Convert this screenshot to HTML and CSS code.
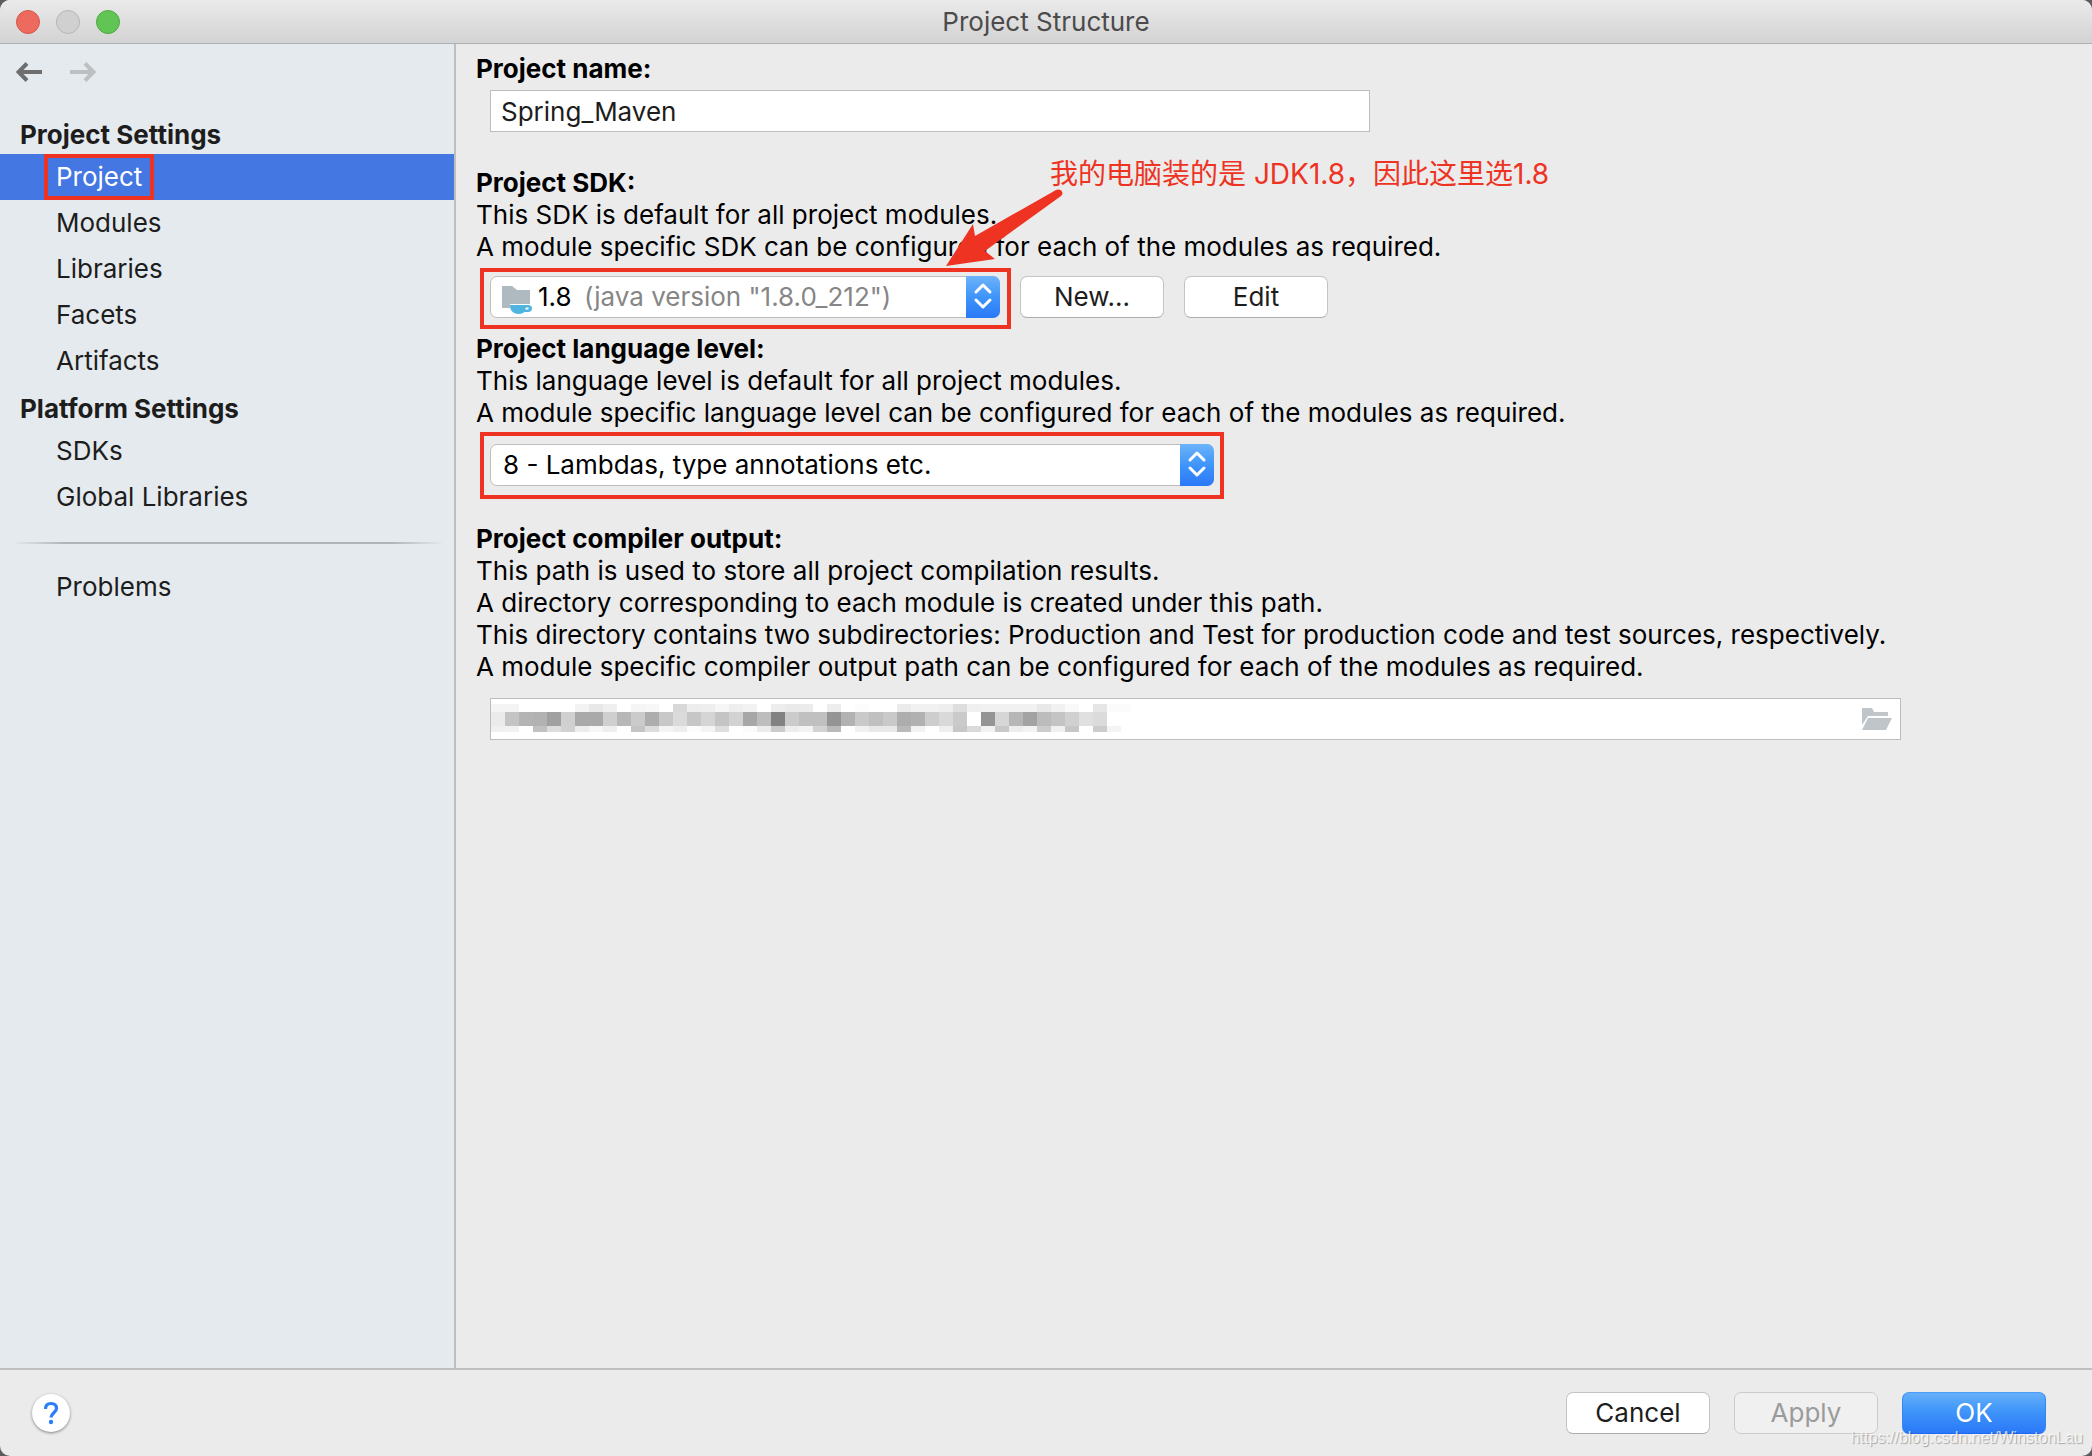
FILE: index.html
```html
<!DOCTYPE html>
<html lang="en">
<head>
<meta charset="utf-8">
<title>Project Structure</title>
<link rel="stylesheet" href="styles.css">
</head>
<body>
<div class="window">
  <header class="titlebar">
    <div class="lights">
      <button class="light light-close" aria-label="Close"></button>
      <button class="light light-minimize" aria-label="Minimize"></button>
      <button class="light light-zoom" aria-label="Zoom"></button>
    </div>
    <h1 class="title">Project Structure</h1>
  </header>

  <div class="content">
    <aside class="sidebar">
      <div class="history">
        <button class="history-button" aria-label="Back">
          <svg width="26" height="20" viewBox="0 0 26 20" fill="none" stroke="#6e6e6e" stroke-width="4"><path d="M26 10H3M11 1.500L2.500 10l8.500 8.500"/></svg>
        </button>
        <button class="history-button" aria-label="Forward" disabled>
          <svg width="26" height="20" viewBox="0 0 26 20" fill="none" stroke="#bdbfc0" stroke-width="4"><path d="M0 10h23M15 1.500L23.500 10 15 18.500"/></svg>
        </button>
      </div>
      <nav>
        <h2 class="group">Project Settings</h2>
        <ul class="items">
          <li><a class="item selected" href="#project" aria-current="page"><span class="marked">Project</span></a></li>
          <li><a class="item" href="#modules">Modules</a></li>
          <li><a class="item" href="#libraries">Libraries</a></li>
          <li><a class="item" href="#facets">Facets</a></li>
          <li><a class="item" href="#artifacts">Artifacts</a></li>
        </ul>
        <h2 class="group group-next">Platform Settings</h2>
        <ul class="items">
          <li><a class="item" href="#sdks">SDKs</a></li>
          <li><a class="item" href="#global">Global Libraries</a></li>
        </ul>
        <hr class="divider">
        <ul class="items">
          <li><a class="item" href="#problems">Problems</a></li>
        </ul>
      </nav>
    </aside>

    <main class="panel">
      <section class="section-name">
        <label class="heading" for="name">Project name:</label>
        <div class="row row-name"><input class="field" id="name" type="text" value="Spring_Maven"></div>
      </section>

      <section class="section-sdk">
        <label class="heading" for="sdk">Project SDK:</label>
        <p>This SDK is default for all project modules.</p>
        <p>A module specific SDK can be configured for each of the modules as required.</p>
        <div class="row row-sdk">
          <div class="combo combo-sdk">
            <select class="combo-select with-icon" id="sdk"><option>1.8</option></select>
            <span class="combo-detail">
              <svg width="30" height="28" viewBox="0 0 30 28"><path d="M0 0h10l5 4h13v14H8v4H0z" fill="#afb9c0"/><path d="M8 19h18c2.600 0 4 1.500 4 3.500S28.500 26 26 26h-3.500c-1.700 1.300-3 2-6 2C11 28 8 24.500 8 19z" fill="#4fb4df"/><path d="M24 21.500h2.500v2H23z" fill="#fff"/></svg>
              <span class="version">(java version "1.8.0_212")</span>
            </span>
            <svg class="stepper" width="34" height="42" viewBox="0 0 34 42" fill="none" stroke="#fff" stroke-width="3" stroke-linecap="round" stroke-linejoin="round"><path d="M10 16l7-7 7 7M10 24l7 7 7-7"/></svg>
            <span class="outline outline-sdk"></span>
          </div>
          <button class="button">New...</button>
          <button class="button">Edit</button>
        </div>
        <svg class="arrow" width="120" height="80" viewBox="0 0 120 80"><path d="M2 77L29 35l2 12L112 1c4-2 9 2 5 6L41 62l10 8z" fill="#ee3323"/></svg>
        <span class="note">我的电脑装的是 JDK1.8，因此这里选1.8</span>
      </section>

      <section class="section-level">
        <label class="heading" for="level">Project language level:</label>
        <p>This language level is default for all project modules.</p>
        <p>A module specific language level can be configured for each of the modules as required.</p>
        <div class="row">
          <div class="combo combo-level">
            <select class="combo-select" id="level"><option>8 - Lambdas, type annotations etc.</option></select>
            <svg class="stepper" width="34" height="42" viewBox="0 0 34 42" fill="none" stroke="#fff" stroke-width="3" stroke-linecap="round" stroke-linejoin="round"><path d="M10 16l7-7 7 7M10 24l7 7 7-7"/></svg>
            <span class="outline outline-level"></span>
          </div>
        </div>
      </section>

      <section class="section-output">
        <label class="heading" for="output">Project compiler output:</label>
        <p>This path is used to store all project compilation results.</p>
        <p>A directory corresponding to each module is created under this path.</p>
        <p>This directory contains two subdirectories: Production and Test for production code and test sources, respectively.</p>
        <p>A module specific compiler output path can be configured for each of the modules as required.</p>
        <div class="row row-output">
          <input class="field" id="output" type="text">
          <svg class="mosaic" id="mosaic" width="640" height="30" viewBox="0 0 640 30" shape-rendering="crispEdges"></svg>
          <button class="browse" aria-label="Browse">
            <svg width="30" height="22" viewBox="0 0 30 22" fill="#bfc5c9"><path d="M0 0h10l2 4h14v4H6L0 17z"/><path d="M6 10h24l-6 12H0z"/></svg>
          </button>
        </div>
      </section>
    </main>
  </div>

  <footer class="footer">
    <button class="help" aria-label="Help">
      <svg width="16" height="24" viewBox="0 0 16 24"><path d="M2.500 8C2.500 4 4.500 2.500 8 2.500s5.500 2 5.500 5c0 4-5.500 4.500-5.500 9" fill="none" stroke="#2a7dfb" stroke-width="3.200"/><circle cx="8" cy="21" r="2.200" fill="#2a7dfb"/></svg>
    </button>
    <div class="actions">
      <button class="button">Cancel</button>
      <button class="button" disabled>Apply</button>
      <button class="button primary">OK</button>
    </div>
    <span class="watermark">https://blog.csdn.net/WinstonLau</span>
  </footer>
</div>
<script src="script.js"></script>
</body>
</html>
```
FILE: script.js
```js
// Pixelated cover over the private output path: three rows of grey cells.
const rows = [
  { y: 0, h: 8, cells: "f4 f4 ff ff ff ff f3 e8 ef ff f5 f7 ff d8 ed ee f6 ee f2 ff ed ea eb ff ed ff fc ff ff eb f1 f1 ee de f0 f1 f1 f1 f1 e8 f1 f9 ff e6 fb fb" },
  { y: 8, h: 14, cells: "eb c4 b4 b2 a0 d0 a9 a9 cf b7 cb ad c8 da c6 d5 c4 d2 a7 bd 82 cb c0 c0 94 b2 c9 c0 c9 ad b1 cd d9 ca ff 94 d6 b6 a3 bc c4 d0 e0 db" },
  { y: 22, h: 6, cells: "f0 f2 ff c0 dc d1 ec f6 ee ff c4 dc f4 ee fc f4 de ff fb eb cb ed f3 d2 b9 ff f0 e8 e8 b9 f2 ff ee c7 da f2 c8 ed f3 cc f0 c6 ff cc f4" }
];
const mosaic = document.getElementById("mosaic");
for (const row of rows) {
  row.cells.split(" ").forEach((tone, i) => {
    const cell = document.createElementNS("http://www.w3.org/2000/svg", "rect");
    cell.setAttribute("x", i * 14);
    cell.setAttribute("y", row.y);
    cell.setAttribute("width", 14);
    cell.setAttribute("height", row.h);
    cell.setAttribute("fill", "#" + tone.repeat(3));
    mosaic.append(cell);
  });
}
```
FILE: styles.css
```css
* { box-sizing: border-box; }

body {
  margin: 0;
  background: #5c5c5c;
  color: #000;
  font-family: Inter, "Noto Sans CJK SC", sans-serif;
  font-size: 26px;
  line-height: 32px;
}

h1, h2, p, ul { margin: 0; padding: 0; }
button, input, select { font: inherit; color: #1d1d1d; margin: 0; }
button { padding: 0; }
svg { display: block; }

.window {
  display: flex;
  flex-direction: column;
  min-height: 100vh;
  background: #ebebeb;
  border-radius: 10px;
  overflow: hidden;
}

.titlebar {
  display: grid;
  grid-template-columns: 1fr auto 1fr;
  align-items: center;
  height: 44px;
  padding: 0 16px;
  background: linear-gradient(#eaeaea, #d3d3d3);
  border-bottom: 1px solid #b1b1b1;
}
.lights { display: flex; gap: 16px; }
.light {
  width: 24px;
  height: 24px;
  border: 1px solid #b5b5b5;
  border-radius: 50%;
  background: #d0d0d0;
}
.light-close { background: #ed6a5e; border-color: #d5574c; }
.light-zoom { background: #61c555; border-color: #4fa73f; }
.title { font-size: 26px; font-weight: 400; color: #4b4b4b; }

.content { display: flex; flex: 1; }

.sidebar {
  flex: 0 0 456px;
  background: #e5eaee;
  border-right: 2px solid #bfbfbf;
}
.history { display: flex; gap: 28px; padding: 18px 16px 34px; }
.history-button { border: 0; background: none; height: 20px; }
.group {
  padding-left: 20px;
  font-size: 26px;
  font-weight: 700;
  line-height: 38px;
  color: #1d1d1d;
}
.group-next { padding-top: 6px; }
.items { list-style: none; }
.item {
  display: flex;
  height: 46px;
  padding-left: 56px;
  line-height: 46px;
  color: #1d1d1d;
  text-decoration: none;
}
.selected { padding-left: 44px; background: #4477e2; color: #fff; }
.marked { border: 4px solid #ee3323; padding: 0 8px; line-height: 38px; }
.divider {
  height: 2px;
  margin: 22px 10px 20px 12px;
  border: 0;
  background: linear-gradient(90deg, transparent, #b2b5b8 12%, #b2b5b8 88%, transparent);
}

.panel { flex: 1; padding: 9px 20px 40px; min-width: 0; }
.heading { display: block; width: max-content; font-weight: 700; }
.row { display: flex; gap: 20px; padding: 15px 0 0 14px; }
.field {
  width: 100%;
  height: 42px;
  padding: 0 10px;
  border: 1px solid #bdbdbd;
  background: #fff;
  border-radius: 0;
}
.section-name { margin-bottom: 35px; }
.row-name { max-width: 894px; padding-top: 5px; }

.section-sdk { position: relative; margin-bottom: 15px; }
.row-sdk { padding-top: 13px; }
.combo {
  position: relative;
  display: grid;
  grid-template-columns: 1fr 34px;
  height: 42px;
}
.combo-sdk { width: 510px; }
.combo-level { width: 724px; }
.combo-select {
  grid-area: 1 / 1 / 2 / 3;
  appearance: none;
  height: 42px;
  padding: 0 44px 0 12px;
  border: 1px solid #bdbdbd;
  border-radius: 7px;
  background: #fff;
  color: #000;
}
.with-icon { padding-left: 47px; }
.combo-detail {
  grid-area: 1 / 1;
  display: flex;
  align-items: center;
  gap: 52px;
  padding-left: 12px;
  position: relative;
  pointer-events: none;
  color: #868686;
}
.combo-detail svg { margin-top: 6px; }
.stepper {
  grid-area: 1 / 2;
  position: relative;
  pointer-events: none;
  border-radius: 0 7px 7px 0;
  background: linear-gradient(#6cb3fa, #3f95f9 50%, #2a78f8);
}
.outline { position: absolute; border: 4px solid #ee3323; pointer-events: none; }
.outline-sdk { inset: -8px -11px -11px -10px; }
.outline-level { inset: -12px -10px -13px -10px; }

.button {
  width: 144px;
  height: 42px;
  border: 1px solid #c4c4c4;
  border-bottom-color: #acacac;
  border-radius: 7px;
  background: #fff;
}
.button:disabled { background: #f0f0f0; border-color: #cbcbcb; color: #9b9b9b; }
.primary {
  border-color: #4a9af8 #3385f8 #1f68f3;
  background: linear-gradient(#65b0fa, #3f95f9 45%, #2a78f8);
  color: #fff;
}

.arrow { position: absolute; left: 468px; top: 22px; pointer-events: none; }
.note {
  position: absolute;
  left: 574px;
  top: -9px;
  font-size: 28px;
  color: #ee3323;
  white-space: nowrap;
}

.section-level { margin-bottom: 37px; }

.row-output { position: relative; max-width: 1425px; }
.mosaic { position: absolute; left: 15px; top: 21px; pointer-events: none; }
.browse {
  position: absolute;
  right: 9px;
  top: 25px;
  border: 0;
  background: none;
}

.footer {
  position: relative;
  display: flex;
  justify-content: space-between;
  align-items: center;
  height: 88px;
  padding: 0 46px 0 32px;
  border-top: 2px solid #bfbfbf;
}
.help {
  display: grid;
  place-items: center;
  width: 38px;
  height: 38px;
  border: 0;
  border-radius: 50%;
  background: #fff;
  box-shadow: 0 1px 3px rgba(0, 0, 0, .45);
}
.actions { display: flex; gap: 24px; }
.watermark {
  position: absolute;
  right: 9px;
  bottom: 6px;
  font: 16px/24px "Liberation Sans", sans-serif;
  color: rgba(255, 255, 255, .75);
  text-shadow: 1px 1px 1px rgba(0, 0, 0, .3);
}
```
